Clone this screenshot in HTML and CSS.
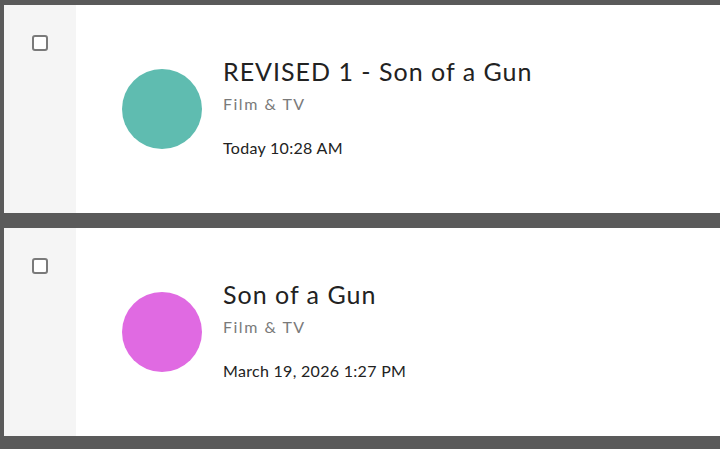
FILE: index.html
```html
<!DOCTYPE html>
<html lang="en">
<head>
<meta charset="utf-8">
<title>List</title>
<link rel="stylesheet" href="styles.css">
</head>
<body>
<div class="list">
  <div class="card">
    <div class="side"><span class="check"></span></div>
    <div class="main">
      <div class="avatar teal"></div>
      <div class="info">
        <div class="title">REVISED 1 - Son of a Gun</div>
        <div class="cat">Film &amp; TV</div>
        <div class="date">Today 10:28 AM</div>
      </div>
    </div>
  </div>
  <div class="card">
    <div class="side"><span class="check"></span></div>
    <div class="main">
      <div class="avatar pink"></div>
      <div class="info">
        <div class="title">Son of a Gun</div>
        <div class="cat">Film &amp; TV</div>
        <div class="date">March 19, 2026 1:27 PM</div>
      </div>
    </div>
  </div>
</div>
</body>
</html>
```
FILE: styles.css
```css
html, body {
  margin: 0;
  padding: 0;
}
body {
  background: #5a5a5a;
  font-family: Lato, "Open Sans", sans-serif;
  height: 449px;
  overflow: hidden;
}
.list {
  display: flex;
  flex-direction: column;
  gap: 15px;
  padding: 5px 0 0 4px;
}
.card {
  display: flex;
  height: 208px;
  background: #ffffff;
}
.side {
  width: 72px;
  background: #f5f5f5;
  display: flex;
  justify-content: center;
  padding-top: 30px;
  box-sizing: border-box;
}
.check {
  width: 12px;
  height: 12px;
  border: 2px solid #7a7a7a;
  border-radius: 3px;
  background: #fff;
}
.main {
  flex: 1;
  display: flex;
  align-items: center;
  padding-left: 46px;
}
.avatar {
  width: 80px;
  height: 80px;
  border-radius: 50%;
  flex: none;
}
.teal { background: #5fbcb0; }
.pink { background: #e06ae2; }
.info {
  margin-left: 21px;
  padding-bottom: 4px;
}
.title {
  font-size: 25px;
  line-height: 28px;
  color: #222;
  letter-spacing: 1px;
}
.cat {
  margin-top: 9px;
  font-size: 16px;
  line-height: 20px;
  color: #7a7a7a;
  letter-spacing: 1.5px;
}
.date {
  margin-top: 24px;
  font-size: 16px;
  line-height: 20px;
  color: #222;
  letter-spacing: 0.3px;
}
```
